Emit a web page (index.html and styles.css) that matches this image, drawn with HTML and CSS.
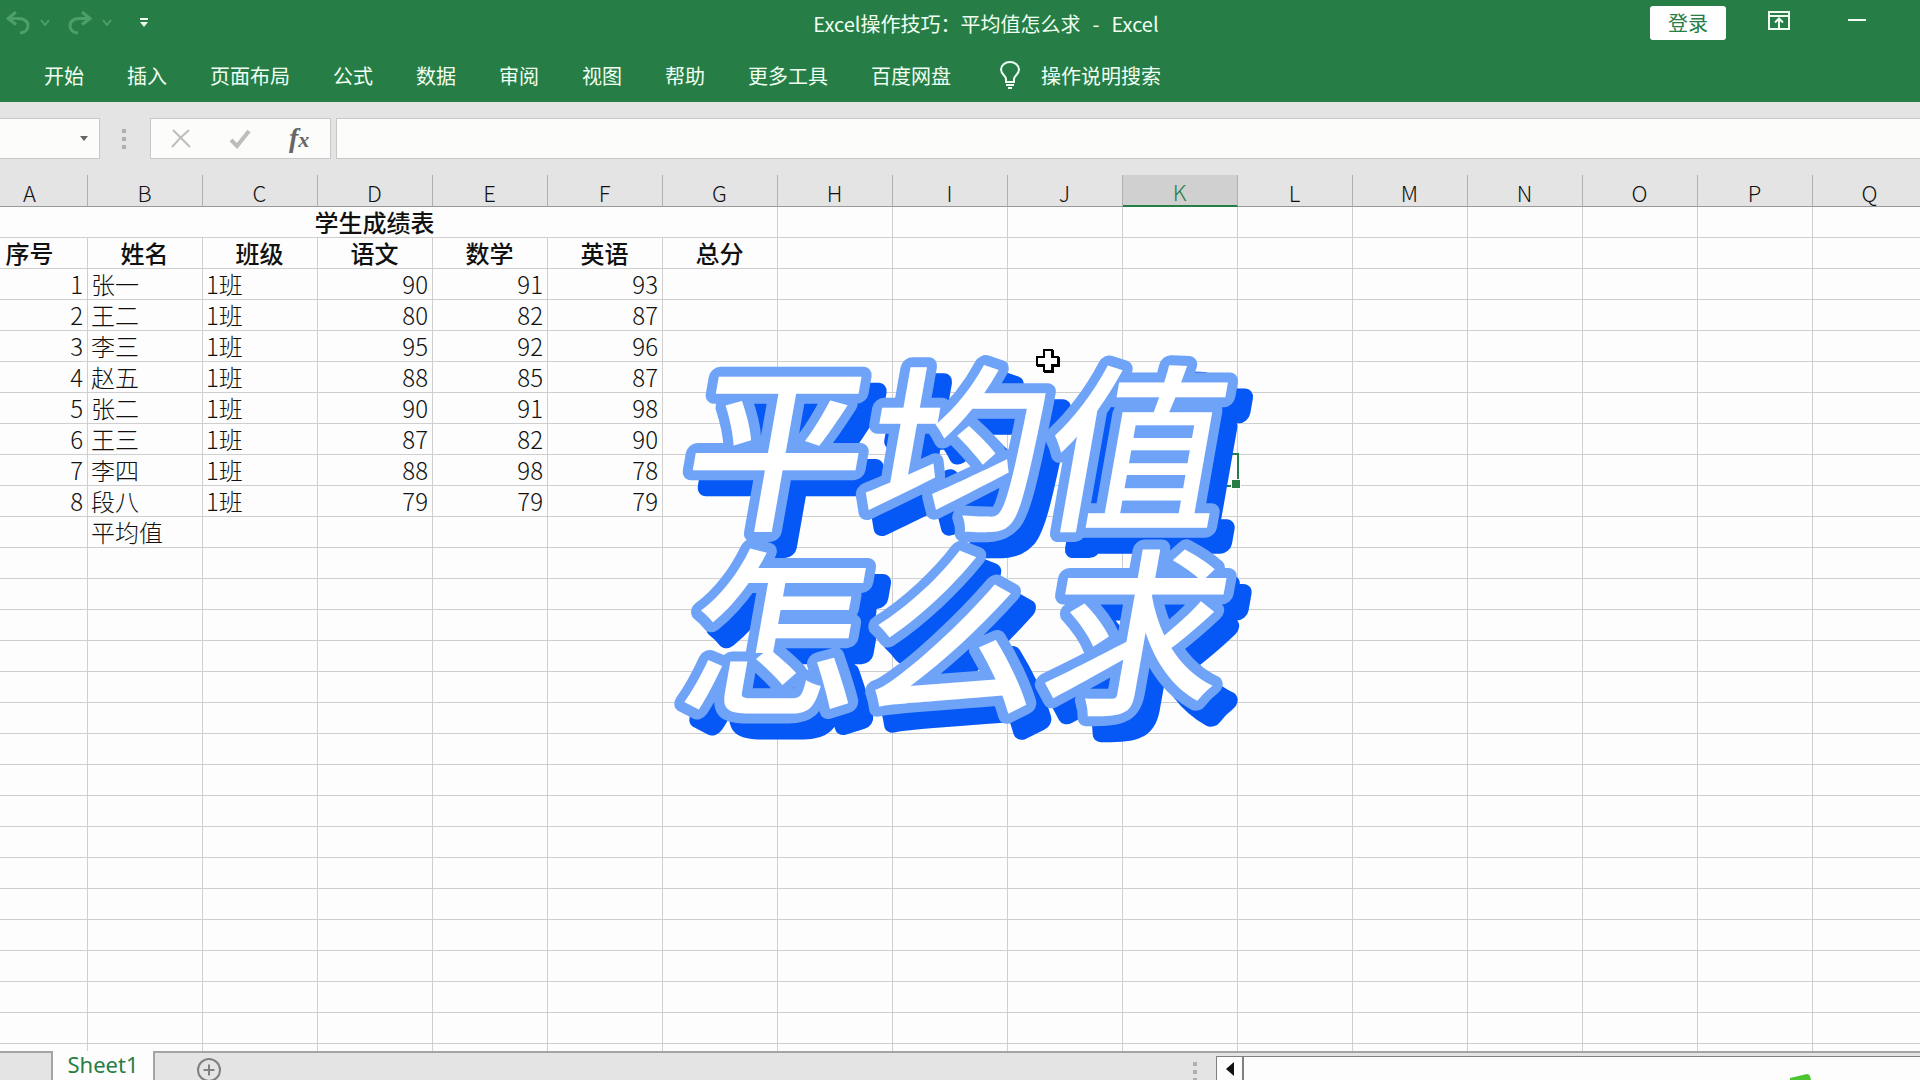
FILE: index.html
```html
<!DOCTYPE html>
<html lang="zh-CN">
<head>
<meta charset="utf-8">
<title>Excel操作技巧：平均值怎么求 - Excel</title>
<link rel="stylesheet" href="styles.css">
</head>
<body>
<div class="app">
  <header class="top">
    <div class="titlebar">
      <div class="quick">
        <button class="icon-btn undo" aria-label="撤消"><svg width="24" height="24" viewBox="0 0 24 24"><path d="M10 1 2 7.500l8 6M2.500 7.500H13c5 0 9 3 9 7s-3 7-8 7.500" /></svg></button>
        <button class="icon-btn chev" aria-label="撤消列表"><svg width="10" height="8" viewBox="0 0 10 8"><path d="M1 1l4 5 4-5"/></svg></button>
        <button class="icon-btn redo" aria-label="恢复"><svg width="24" height="24" viewBox="0 0 24 24"><path d="M14 1l8 6.500-8 6M21.500 7.500H11c-5 0-9 3-9 7s3 7 8 7.500"/></svg></button>
        <button class="icon-btn chev" aria-label="恢复列表"><svg width="10" height="8" viewBox="0 0 10 8"><path d="M1 1l4 5 4-5"/></svg></button>
        <button class="icon-btn custom" aria-label="自定义快速访问工具栏"><svg width="8" height="10" viewBox="0 0 8 10"><path d="M0 0h8v2H0zM0 4h8L4 9z"/></svg></button>
      </div>
      <h1 class="title"><span>Excel操作技巧：平均值怎么求</span><span>-</span><span>Excel</span></h1>
      <div class="window-tools">
        <button class="login">登录</button>
        <button class="icon-btn" aria-label="功能区显示选项"><svg width="22" height="20" viewBox="0 0 22 20"><path d="M1 1h20v17H1zM1 5h20M11 17V8M7 11.500l4-4 4 4"/></svg></button>
        <button class="icon-btn" aria-label="最小化"><svg width="18" height="20" viewBox="0 0 18 20"><path d="M0 9h18"/></svg></button>
      </div>
    </div>
    <nav class="ribbon">
      <a href="#">开始</a><a href="#">插入</a><a href="#">页面布局</a><a href="#">公式</a><a href="#">数据</a><a href="#">审阅</a><a href="#">视图</a><a href="#">帮助</a><a href="#">更多工具</a><a href="#">百度网盘</a>
      <a href="#" class="tell"><svg width="22" height="28" viewBox="0 0 22 28"><path d="M7 21v-3C7 15 2 13 2 8.500a9 7.500 0 0 1 18 0C20 13 15 15 15 18v3zM7 24h8M9 27h4"/></svg>操作说明搜索</a>
    </nav>
  </header>

  <div class="formula">
    <div class="namebox"><input aria-label="名称框"><svg width="8" height="5" viewBox="0 0 8 5"><path d="M0 0h8L4 5z"/></svg></div>
    <div class="grip"><i></i><i></i><i></i></div>
    <div class="fx-box">
      <button class="icon-btn" aria-label="取消"><svg width="20" height="20" viewBox="0 0 20 20"><path d="M2 1c5 5 11 11 17 17M18 1C12 6 6 12 1 18"/></svg></button>
      <button class="icon-btn tick" aria-label="输入"><svg width="22" height="20" viewBox="0 0 22 20"><path d="M2 11l6 6L20 2"/></svg></button>
      <button class="icon-btn fx" aria-label="插入函数"><span class="f">f</span><span class="x">x</span></button>
    </div>
    <input class="formula-input" aria-label="编辑栏">
  </div>

  <main class="sheet">
    <table class="grid">
      <thead><tr></tr></thead>
      <tbody></tbody>
    </table>
  </main>

  <footer class="tabs">
    <div class="tab-lead"></div>
    <button class="tab">Sheet1</button>
    <div class="tab-rest">
      <button class="icon-btn add" aria-label="新工作表"><svg width="26" height="26" viewBox="0 0 26 26"><circle cx="13" cy="13" r="11"/><path d="M13 7.500v11M7.500 13h11"/></svg></button>
      <div class="grip"><i></i><i></i><i></i></div>
    </div>
    <div class="scroll">
      <button class="icon-btn arrow" aria-label="向左滚动"><svg width="8" height="14" viewBox="0 0 8 14"><path d="M8 0v14L0 7z"/></svg></button>
      <div class="track"><svg class="leaf" width="22" height="6" viewBox="0 0 22 6"><path d="M0 4 17 0q2 0 3 2l1 4H0z"/></svg></div>
    </div>
  </footer>
</div>

<div class="caption">
  <svg width="600" height="400" viewBox="0 0 600 400">
    <g transform="skewX(-10)">
      <text x="47" y="177">平均值</text>
      <text x="79" y="361">怎么求</text>
    </g>
  </svg>
</div>
<svg class="pointer" width="24" height="24" viewBox="0 0 24 24"><path class="shade" d="M9 2h8v7h6v8h-6v6H9v-6H2V9h7z"/><path d="M8 1h8v7h6v8h-6v6H8v-6H1V8h7z"/></svg>
<script src="sheet.js"></script>
</body>
</html>
```
FILE: styles.css
```css
* { box-sizing: border-box; }
body {
  margin: 0;
  font-family: "Noto Sans CJK SC", sans-serif;
  font-size: 20px;
  color: #111;
  overflow: hidden;
}
button, input { font: inherit; color: inherit; border: 0; background: none; padding: 0; margin: 0; }
svg { display: block; fill: none; stroke: currentColor; stroke-width: 2; }
.icon-btn { display: flex; align-items: center; }

.app { height: 100vh; display: flex; flex-direction: column; background: #e4e4e4; }

.top { background: #267e46; color: #f0fff2; }
.titlebar { display: grid; grid-template-columns: 1fr auto 1fr; height: 46px; align-items: center; }
.quick { display: flex; align-items: center; padding-left: 6px; color: #4d9f68; }
.quick svg { stroke-width: 3; }
.quick .chev { margin: 0 18px 0 10px; }
.quick .chev svg { stroke-width: 2; }
.quick .custom { color: #f0fff2; margin-left: 10px; }
.quick .custom svg { fill: currentColor; stroke: none; }
.title { margin: 0; font-size: 20px; font-weight: 400; display: flex; gap: 12px; padding-left: 52px; }
.window-tools { display: flex; justify-content: flex-end; align-items: center; gap: 42px; padding-right: 54px; }
.window-tools .icon-btn { padding-bottom: 4px; }
.window-tools .icon-btn:last-child { margin-left: 16px; }
.login { width: 76px; height: 34px; background: #fff; color: #267e46; border-radius: 3px; line-height: 34px; }

.ribbon { display: flex; gap: 43px; padding: 2px 0 0 44px; height: 56px; align-items: center; }
.ribbon a { color: inherit; text-decoration: none; }
.ribbon .tell { display: flex; align-items: center; gap: 20px; margin-left: 5px; }

.formula { display: flex; align-items: center; height: 73px; }
.namebox, .fx-box, .formula-input { height: 41px; background: #fcfcfa; border: 1px solid #c8c8c8; }
.namebox { display: flex; align-items: center; width: 100px; border-left: 0; padding-right: 11px; }
.namebox input { flex: 1; min-width: 0; }
.namebox svg { fill: #666; stroke: none; }
.grip { display: flex; flex-direction: column; gap: 4px; }
.grip i { width: 4px; height: 4px; background: #b0b0b0; }
.formula .grip { margin: 0 24px 0 22px; }
.fx-box { display: flex; align-items: center; width: 181px; padding-left: 20px; gap: 38px; color: #bdbdbd; margin-right: 5px; }
.tick svg { stroke-width: 4; }
.fx { font-family: "Liberation Serif", serif; font-style: italic; color: #666; font-weight: 700; line-height: 28px; padding-bottom: 2px; }
.fx .f { font-size: 28px; }
.fx .x { font-size: 22px; padding-top: 4px; }
.formula-input { flex: 1; min-width: 0; border-right: 0; }

.sheet { flex: 1; min-height: 0; overflow: hidden; background: #fdfdfd; }
.grid { border-collapse: separate; border-spacing: 0; table-layout: fixed; width: 1955px; margin-left: -27px; }
.grid th, .grid td { height: 31px; padding: 0 4px 0 3px; white-space: nowrap; border-right: 1px solid #cfcfcf; border-bottom: 1px solid #cfcfcf; line-height: 30px; }
.grid thead th { background: #e4e4e4; border-right-color: #b0b0b0; border-bottom-color: #999; font-size: 22px; font-weight: 300; line-height: 28px; padding-top: 2px; }
.grid thead th.active { background: #d0d0d0; color: #267e46; border-bottom: 2px solid #267e46; }
.grid td { font-size: 24px; font-weight: 300; }
.grid .num { text-align: right; }
.grid .script { font-family: STXingkai, KaiTi, "Noto Sans CJK SC", sans-serif; font-weight: 500; line-height: 28px; text-align: center; }
.grid .cursor { position: relative; }
.cursor::before { content: ""; position: absolute; inset: -2px; border: 2px solid #267e46; }
.cursor::after { content: ""; position: absolute; right: -4px; bottom: -4px; width: 8px; height: 8px; background: #267e46; border: 1px solid #fff; }

.tabs { display: flex; height: 29px; }
.tab-lead { width: 53px; border-top: 2px solid #a4a4a4; border-right: 2px solid #a4a4a4; }
.tab { width: 100px; background: #fdfdfd; color: #267e46; font-family: "Noto Sans", sans-serif; font-size: 22px; line-height: 26px; padding-bottom: 3px; }
.tab-rest { flex: 1; display: flex; justify-content: space-between; align-items: flex-start; border-top: 2px solid #a4a4a4; border-left: 2px solid #a4a4a4; padding: 4px 19px 0 41px; }
.add { color: #808080; }
.tab-rest .grip { padding-top: 5px; }
.scroll { display: flex; width: 704px; border-top: 2px solid #a4a4a4; padding-top: 3px; }
.arrow { width: 28px; height: 24px; justify-content: center; background: #fdfdfd; border: 1px solid #808080; border-bottom: 0; border-right-width: 2px; }
.arrow svg { fill: #111; stroke: none; }
.track { flex: 1; background: #fdfdfd; border-top: 1px solid #808080; display: flex; justify-content: flex-end; align-items: flex-end; padding-right: 108px; }
.track .leaf { fill: #4cc531; stroke: none; }

.caption { position: fixed; inset: 0; display: flex; align-items: center; justify-content: center; pointer-events: none; }
.caption svg { overflow: visible; filter: drop-shadow(15px 16px 0 #0558f5); }
.caption text { font-size: 180px; font-weight: 500; fill: #fff; stroke: #6fa3f7; stroke-width: 20px; stroke-linejoin: round; paint-order: stroke; }
.pointer { position: fixed; left: 1036px; top: 349px; fill: #fff; stroke: #000; }
.pointer .shade { fill: #000; }
```
FILE: sheet.js
```js
const letters = 'ABCDEFGHIJKLMNOPQ'.split('');
const headings = ['序号', '姓名', '班级', '语文', '数学', '英语', '总分'];
const records = [
  [1, '张一', '1班', 90, 91, 93],
  [2, '王二', '1班', 80, 82, 87],
  [3, '李三', '1班', 95, 92, 96],
  [4, '赵五', '1班', 88, 85, 87],
  [5, '张二', '1班', 90, 91, 98],
  [6, '王三', '1班', 87, 82, 90],
  [7, '李四', '1班', 88, 98, 78],
  [8, '段八', '1班', 79, 79, 79],
  ['', '平均值'],
];

const headRow = document.querySelector('.grid thead tr');
for (const letter of letters) {
  const th = document.createElement('th');
  th.scope = 'col';
  th.textContent = letter;
  if (letter === 'K') th.className = 'active';
  headRow.append(th);
}

const body = document.querySelector('.grid tbody');
for (let r = 1; r <= 28; r++) {
  const row = body.insertRow();
  for (let c = 0; c < letters.length; c++) {
    if (r === 1 && c > 0 && c < 7) continue;
    const cell = row.insertCell();
    if (r === 1 && c === 0) {
      cell.colSpan = 7;
      cell.className = 'script';
      cell.textContent = '学生成绩表';
    } else if (r === 2 && c < 7) {
      cell.className = 'script';
      cell.textContent = headings[c];
    } else if (r > 2 && records[r - 3]) {
      const value = records[r - 3][c] ?? '';
      cell.textContent = value;
      if (typeof value === 'number') cell.className = 'num';
    }
    if (r === 9 && letters[c] === 'K') cell.className = 'cursor';
  }
}
```
